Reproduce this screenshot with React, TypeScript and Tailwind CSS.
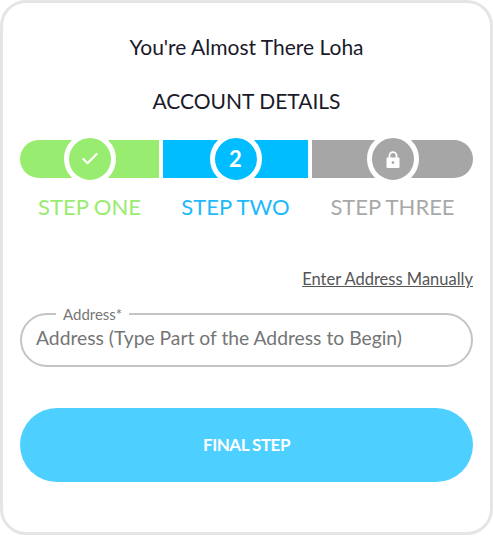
import { Check } from "lucide-react";

type Step = {
  label: string;
  barClass: string;
  circleClass: string;
  textClass: string;
  width: string;
  mark: React.ReactNode;
};

function LockMark() {
  return (
    <svg width="14" height="17" viewBox="0 0 14 17">
      <path d="M3.5 7V4.6a3.5 3.5 0 0 1 7 0V7" fill="none" stroke="#fff" strokeWidth="1.8" />
      <path
        fillRule="evenodd"
        fill="#fff"
        d="M1.5 6.5h11a1 1 0 0 1 1 1v8.5a1 1 0 0 1-1 1h-11a1 1 0 0 1-1-1V7.5a1 1 0 0 1 1-1zM7 10.2a1.4 1.4 0 1 0 0 2.8a1.4 1.4 0 0 0 0-2.8z"
      />
    </svg>
  );
}

const steps: Step[] = [
  {
    label: "STEP ONE",
    barClass: "bg-[#98ec6f] rounded-l-[19px]",
    circleClass: "bg-[#98ec6f]",
    textClass: "text-[#98ec6f]",
    width: "w-[139px]",
    mark: <Check size={20} strokeWidth={2.6} />,
  },
  {
    label: "STEP TWO",
    barClass: "bg-[#00bdff]",
    circleClass: "bg-[#00bdff]",
    textClass: "text-[#1cb9fb]",
    width: "w-[145px]",
    mark: <span className="text-[22px] font-bold leading-none">2</span>,
  },
  {
    label: "STEP THREE",
    barClass: "bg-[#a6a6a6] rounded-r-[19px]",
    circleClass: "bg-[#a6a6a6]",
    textClass: "text-[#a9a9a9]",
    width: "w-[161px]",
    mark: <LockMark />,
  },
];

export default function App() {
  return (
    <div className="h-[536px] w-[493px] bg-white font-['Lato','Liberation_Sans',sans-serif]">
      <div className="flex h-[535px] flex-col rounded-[26px] border-[3px] border-[#e5e5e5] px-[17px] pt-[32px]">
        <h1 className="text-center text-[21px] leading-6 text-[#1a1a2a]">You're Almost There Loha</h1>
        <h2 className="mt-[30px] text-center text-[21px] leading-6 text-[#1a1a2a]">ACCOUNT DETAILS</h2>

        {/* stepper */}
        <div className="mt-[27px] flex gap-1">
          {steps.map((step) => (
            <div key={step.label} className={`${step.width} flex flex-col items-center`}>
              <div className={`${step.barClass} flex h-[38px] w-full items-center justify-center`}>
                <div className={`${step.circleClass} z-10 flex size-[52px] shrink-0 items-center justify-center rounded-full border-[5px] border-white text-white`}>
                  {step.mark}
                </div>
              </div>
              <span className={`${step.textClass} mt-[15px] text-[22px] leading-[28px]`}>{step.label}</span>
            </div>
          ))}
        </div>

        <div className="mt-[48px] flex justify-end">
          <a className="text-[16.5px] leading-5 text-[#555] underline">Enter Address Manually</a>
        </div>

        {/* address field */}
        <div className="relative mt-[24px] flex h-[54px] items-center rounded-[27px] border-2 border-[#c4c4c4] pb-1 pl-[14px]">
          <span className="absolute -top-[9px] left-[34px] bg-white px-[7px] text-[15px] leading-4 text-[#777]">Address*</span>
          <span className="text-[19.3px] text-[#757575]">Address (Type Part of the Address to Begin)</span>
        </div>

        <button className="mt-[41px] h-[74px] w-full rounded-[37px] bg-[#4dd0ff] text-[17px] font-bold tracking-[-0.5px] text-white">
          FINAL STEP
        </button>
      </div>
    </div>
  );
}
